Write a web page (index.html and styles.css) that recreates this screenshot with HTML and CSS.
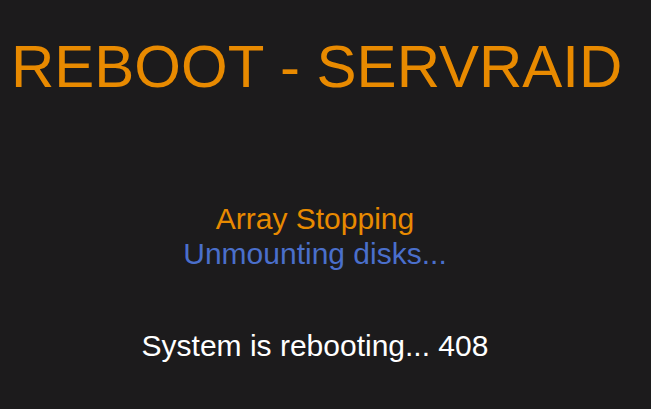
FILE: index.html
```html
<!DOCTYPE html>
<html lang="en">
  <head>
    <meta charset="UTF-8" />
    <meta name="viewport" content="width=device-width, initial-scale=1.0" />
    <title>Reboot - SERVRAID</title>
    <link rel="stylesheet" href="styles.css">
  </head>
  <body>
    <h1 class="title">REBOOT - SERVRAID</h1>

    <div class="status">
      <div class="status-main">Array Stopping</div>
      <div class="status-sub">Unmounting disks...</div>
    </div>

    <p class="countdown">System is rebooting... <span id="seconds">408</span></p>
  </body>
</html>
```

FILE: styles.css
```css
html {
  background: #1c1b1c;
}

body {
  margin: 0 21px 0 0;
  color: #ffffff;
  font-family: "Liberation Sans", Arial, sans-serif;
}

.title {
  margin: 0;
  padding: 32px 0 0 11px;
  font-size: 60px;
  font-weight: normal;
  color: #e88a00;
  white-space: nowrap;
}

.status {
  margin-top: 100px;
  text-align: center;
  font-size: 30px;
  line-height: 35px;
}

.status-main {
  color: #e88a00;
}

.status-sub {
  color: #4a6fcb;
}

.countdown {
  margin: 58px 0 0;
  text-align: center;
  font-size: 30px;
}
```
